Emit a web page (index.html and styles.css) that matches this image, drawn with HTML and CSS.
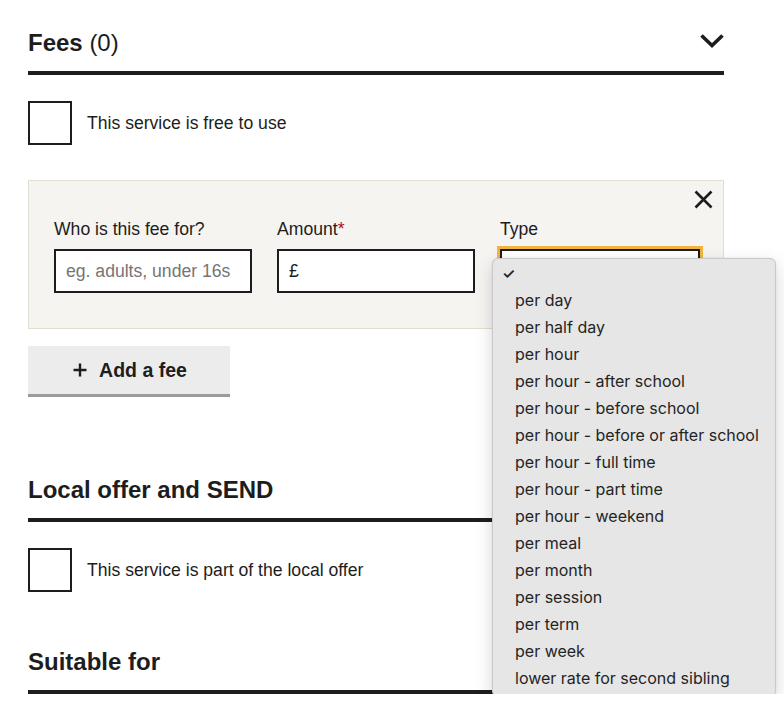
FILE: index.html
```html
<!DOCTYPE html>
<html lang="en">
<head>
<meta charset="utf-8">
<title>Fees</title>
<link rel="stylesheet" href="styles.css">
</head>
<body>
<main class="page">
  <section class="section">
    <div class="section-head first-head">
      <h2 class="heading">Fees <span class="count">(0)</span></h2>
      <svg class="chevron" width="26" height="16" viewBox="0 0 26 16"><polyline points="2.5,2.5 13,12.5 23.5,2.5" fill="none" stroke="#1d1d1d" stroke-width="3.6"/></svg>
    </div>
    <label class="check-row">
      <span class="checkbox"></span>
      <span class="check-label">This service is free to use</span>
    </label>

    <div class="fee-panel">
      <button class="close" aria-label="Remove">
        <svg width="19" height="19" viewBox="0 0 19 19"><path d="M1.5 1.5 L17.5 17.5 M17.5 1.5 L1.5 17.5" stroke="#1d1d1d" stroke-width="2.6" fill="none"/></svg>
      </button>
      <div class="fields">
        <div class="field">
          <div class="label">Who is this fee for?</div>
          <div class="input placeholder">eg. adults, under 16s</div>
        </div>
        <div class="field">
          <div class="label">Amount<span class="req">*</span></div>
          <div class="input">£</div>
        </div>
        <div class="field">
          <div class="label">Type</div>
          <div class="select-wrap">
            <div class="input select"></div>
            <ul class="dropdown">
              <li class="selected"><span class="tick">✓</span></li>
              <li>per day</li>
              <li>per half day</li>
              <li>per hour</li>
              <li>per hour - after school</li>
              <li>per hour - before school</li>
              <li>per hour - before or after school</li>
              <li>per hour - full time</li>
              <li>per hour - part time</li>
              <li>per hour - weekend</li>
              <li>per meal</li>
              <li>per month</li>
              <li>per session</li>
              <li>per term</li>
              <li>per week</li>
              <li>lower rate for second sibling</li>
            </ul>
          </div>
        </div>
      </div>
    </div>

    <button class="add-btn">
      <svg width="14" height="14" viewBox="0 0 14 14"><path d="M7 0.5 V13.5 M0.5 7 H13.5" stroke="#1d1d1d" stroke-width="2.4" fill="none"/></svg>
      <span>Add a fee</span>
    </button>
  </section>

  <section class="section second">
    <div class="section-head">
      <h2 class="heading">Local offer and SEND</h2>
    </div>
    <label class="check-row">
      <span class="checkbox"></span>
      <span class="check-label">This service is part of the local offer</span>
    </label>
  </section>

  <section class="section third">
    <div class="section-head">
      <h2 class="heading">Suitable for</h2>
    </div>
  </section>
</main>
</body>
</html>
```

FILE: styles.css
```css
* { box-sizing: border-box; }
html, body { margin: 0; padding: 0; background: #fff; }
body {
  font-family: "Liberation Sans", Arial, sans-serif;
  color: #1d1d1d;
}
.page {
  width: 696px;
  margin-left: 28px;
  padding-top: 26px;
}
.section-head {
  display: flex;
  justify-content: space-between;
  align-items: flex-end;
  border-bottom: 4px solid #1d1d1d;
  padding-bottom: 14px;
}
.first-head {
  height: 49px;
  align-items: flex-start;
  padding-bottom: 0;
}
.first-head .heading { margin-top: 3px; }
.heading {
  margin: 0;
  font-size: 24px;
  font-weight: 700;
  line-height: 28px;
  letter-spacing: 0;
}
.count { font-weight: 400; }
.chevron { margin-top: 7px; margin-right: -1px; }
.check-row {
  display: flex;
  align-items: center;
  gap: 15px;
  margin-top: 26px;
}
.checkbox {
  width: 44px;
  height: 44px;
  border: 2px solid #1d1d1d;
  background: #fff;
  flex: none;
}
.check-label { font-size: 17.6px; line-height: 22px; }

.fee-panel {
  position: relative;
  margin-top: 35px;
  background: #f5f4f1;
  border: 1px solid #e1ded2;
  padding: 38px 24px 35px 25px;
}
.close {
  position: absolute;
  top: 8px;
  right: 9px;
  width: 21px;
  height: 21px;
  padding: 1px;
  border: 0;
  background: none;
}
.fields {
  display: grid;
  grid-template-columns: 198px 198px 200px;
  column-gap: 25px;
}
.label {
  font-size: 17.6px;
  line-height: 20px;
  margin-bottom: 10px;
  white-space: nowrap;
}
.req { color: #b10e1e; }
.input {
  height: 44px;
  border: 2px solid #1d1d1d;
  background: #fff;
  font-size: 17.6px;
  line-height: 40px;
  padding: 0 10px;
  white-space: nowrap;
  overflow: hidden;
}
.placeholder { color: #757575; }
.select-wrap { position: relative; }
.select {
  outline: 3px solid #f1b53e;
  outline-offset: 0;
}
.dropdown {
  position: absolute;
  left: -8px;
  top: 9px;
  width: 284px;
  margin: 0;
  padding: 1px 0 4px;
  list-style: none;
  background: #e6e6e6;
  border: 1px solid #c9c9c9;
  border-radius: 6px;
  box-shadow: 0 6px 18px rgba(0,0,0,0.16), 0 0 2px rgba(0,0,0,0.08);
  font-family: Inter, "Noto Sans", sans-serif;
  font-size: 16px;
  color: #242424;
  z-index: 10;
}
.dropdown li {
  height: 27px;
  line-height: 27px;
  padding-left: 22px;
  white-space: nowrap;
}
.dropdown li.selected { padding-left: 9px; }
.tick { font-size: 15px; font-weight: 600; }

.add-btn {
  display: flex;
  align-items: center;
  justify-content: center;
  gap: 12px;
  margin-top: 17px;
  width: 202px;
  height: 51px;
  border: 0;
  border-bottom: 3px solid #9b9b9b;
  background: #ececec;
  font-family: "Liberation Sans", Arial, sans-serif;
  font-size: 19.5px;
  font-weight: 700;
  color: #1d1d1d;
  padding: 0 0 0 2px;
}
.second { margin-top: 66px; }
.second .section-head { height: 59px; }
.third { margin-top: 50px; }
.third .section-head { height: 52px; }
```
